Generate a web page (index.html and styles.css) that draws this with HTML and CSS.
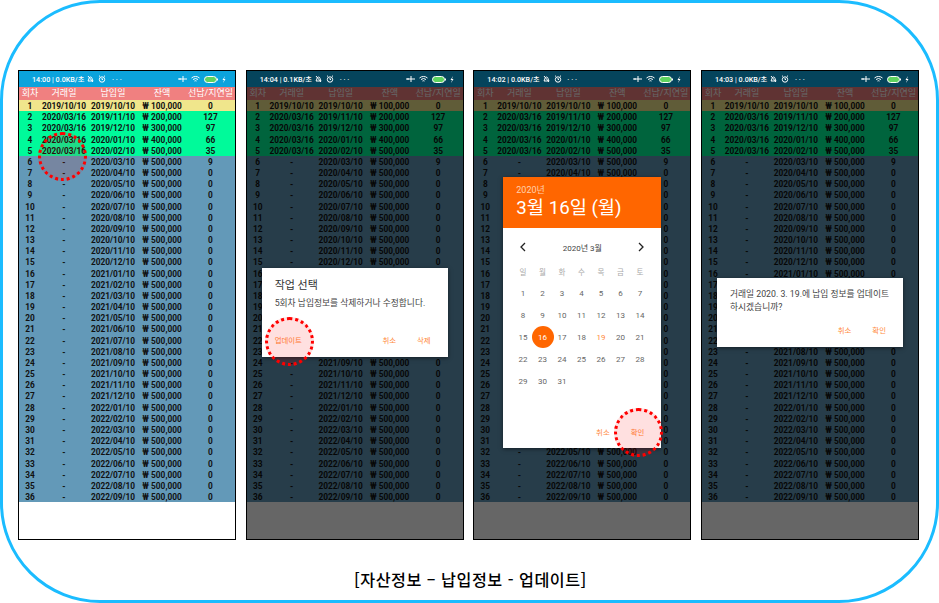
FILE: index.html
```html
<!DOCTYPE html>
<html lang="ko">
<head>
    <meta charset="UTF-8">
    <title>자산정보 - 납입정보 - 업데이트</title>
    <link rel="stylesheet" href="styles.css">
</head>
<body>
    <div class="frame">
        <div class="phones">
            <!-- 1: list -->
            <div class="phone" data-status="14:00 | 0.0KB/초">
                <div class="tap tap-row"></div>
            </div>

            <!-- 2: action dialog -->
            <div class="phone dim" data-status="14:04 | 0.1KB/초">
                <div class="overlay">
                    <div class="dialog dialog-action">
                        <h3 class="dialog-title">작업 선택</h3>
                        <p class="dialog-text">5회차 납입정보를 삭제하거나 수정합니다.</p>
                        <div class="dialog-buttons">
                            <span class="btn btn-left">업데이트</span>
                            <span class="btn">취소</span>
                            <span class="btn">삭제</span>
                        </div>
                    </div>
                </div>
                <div class="tap tap-update"></div>
            </div>

            <!-- 3: date picker -->
            <div class="phone dim" data-status="14:02 | 0.0KB/초">
                <div class="overlay">
                    <div class="dialog picker">
                        <div class="picker-head">
                            <div class="picker-year">2020년</div>
                            <div class="picker-date">3월 16일 (월)</div>
                        </div>
                        <div class="picker-nav">
                            <svg class="chevron" viewBox="0 0 8 10"><path d="M6 1 2 5l4 4" /></svg>
                            <span>2020년 3월</span>
                            <svg class="chevron" viewBox="0 0 8 10"><path d="M2 1l4 4-4 4" /></svg>
                        </div>
                        <div class="calendar" id="calendar"></div>
                        <div class="dialog-buttons picker-buttons">
                            <span class="btn">취소</span>
                            <span class="btn">확인</span>
                        </div>
                    </div>
                </div>
                <div class="tap tap-confirm"></div>
            </div>

            <!-- 4: confirm dialog -->
            <div class="phone dim" data-status="14:03 | 0.0KB/초">
                <div class="overlay">
                    <div class="dialog dialog-confirm">
                        <p class="dialog-text">거래일 2020. 3. 19.에 납입 정보를 업데이트<br>하시겠습니까?</p>
                        <div class="dialog-buttons">
                            <span class="btn">취소</span>
                            <span class="btn">확인</span>
                        </div>
                    </div>
                </div>
            </div>
        </div>
        <div class="caption">[자산정보 – 납입정보 - 업데이트]</div>
    </div>
    <script src="app.js"></script>
</body>
</html>
```

FILE: styles.css
```css
body {
    margin: 0;
    background-color: #fff;
    font-family: Roboto, "Noto Sans CJK KR", sans-serif;
}

.frame {
    width: 939px;
    height: 603px;
    box-sizing: border-box;
    border: 3px solid #1bbcff;
    border-radius: 100px;
    padding: 67px 0 0 15px;
    overflow: hidden;
}

.phones {
    display: flex;
    gap: 9.67px;
}

.phone {
    position: relative;
    width: 218px;
    height: 470px;
    box-sizing: border-box;
    border: 1px solid #000;
    background-color: #fff;
    overflow: hidden;
}

/* status bar */
.status {
    display: flex;
    align-items: center;
    height: 16px;
    padding: 0 6px 0 13px;
    background-color: #0ba3dc;
    color: #fff;
    font-size: 7.2px;
    font-weight: 500;
    white-space: nowrap;
}

.dim .status {
    background-color: #05445c;
}

.status-icons {
    display: flex;
    align-items: center;
    gap: 4px;
    margin-left: 3px;
}

.status-right {
    margin-left: auto;
    margin-right: 3px;
}

.status svg {
    display: block;
    fill: none;
    stroke: #fff;
    stroke-width: 1;
}

/* table */
.row {
    display: grid;
    grid-template-columns: 22px 46px 52px 46px 51px;
    height: 11.18px;
    line-height: 13px;
    font-size: 8.3px;
    font-weight: 700;
    color: #111;
    text-align: center;
    white-space: nowrap;
}

.row-head {
    height: 13px;
    line-height: 13px;
    font-size: 9px;
    font-weight: 400;
    color: #fff;
    background-color: #f08080;
}

.row-first {
    background-color: #f0e68c;
}

.row-paid {
    background-color: #00fa9a;
}

.row-due {
    background-color: #6399b8;
}

/* dialogs */
.overlay {
    position: absolute;
    top: 16px;
    left: 0;
    right: 0;
    bottom: 0;
    background-color: rgba(0, 0, 0, 0.6);
}

.dialog {
    position: absolute;
    background-color: #fff;
    box-shadow: 0 1px 4px rgba(0, 0, 0, 0.5);
    color: #444;
}

.dialog-title {
    margin: 0;
    font-size: 11px;
    font-weight: 400;
    line-height: 16px;
    color: #333;
}

.dialog-text {
    margin: 0;
    font-size: 8.75px;
    line-height: 13px;
    color: #444;
    white-space: nowrap;
}

.dialog-buttons {
    display: flex;
    justify-content: flex-end;
    gap: 21px;
    font-size: 7.4px;
    line-height: 10px;
    color: #ff8a3c;
}

.btn-left {
    margin-right: auto;
}

.dialog-action {
    left: 15px;
    top: 181px;
    width: 186px;
    height: 89px;
    box-sizing: border-box;
    padding: 10px 17px 0 13px;
}

.dialog-action .dialog-text {
    margin-top: 3px;
}

.dialog-action .dialog-buttons {
    margin-top: 26px;
}

.dialog-confirm {
    left: 15px;
    top: 191px;
    width: 186px;
    height: 69px;
    box-sizing: border-box;
    padding: 10px 17px 0 13px;
}

.dialog-confirm .dialog-buttons {
    margin-top: 12px;
}

/* date picker */
.picker {
    left: 29px;
    top: 90px;
    width: 158px;
    height: 271px;
}

.picker-head {
    height: 51px;
    box-sizing: border-box;
    padding: 7px 13px 0;
    background-color: #ff6600;
    color: #fff;
}

.picker-year {
    font-size: 9px;
    line-height: 12px;
    color: #ffd0ae;
}

.picker-date {
    font-size: 18.7px;
    line-height: 24px;
}

.picker-nav {
    display: flex;
    justify-content: space-between;
    align-items: center;
    height: 12px;
    margin-top: 13px;
    padding: 0 16px;
    font-size: 8px;
    color: #444;
}

.chevron {
    width: 8px;
    height: 10px;
    fill: none;
    stroke: #222;
    stroke-width: 1.3;
}

.calendar {
    display: grid;
    grid-template-columns: repeat(7, 19.5px);
    grid-auto-rows: 22px;
    align-items: center;
    justify-items: center;
    margin: 7px 0 0 10px;
    font-size: 8px;
    color: #666;
}

.day-name {
    color: #aaa;
    font-size: 7.5px;
}

.day-now {
    color: #ff8a3c;
}

.day-picked {
    display: flex;
    align-items: center;
    justify-content: center;
    width: 22px;
    height: 22px;
    border-radius: 50%;
    background-color: #ff6600;
    color: #fff;
}

.picker-buttons {
    position: absolute;
    right: 17px;
    bottom: 10px;
    gap: 21px;
}

/* red dotted tap markers */
.tap {
    position: absolute;
    width: 49px;
    height: 49px;
    box-sizing: border-box;
    border: 3px dotted #f00;
    border-radius: 50%;
    background-color: rgba(255, 0, 0, 0.12);
}

.tap-row {
    left: 19px;
    top: 61px;
}

.tap-update {
    left: 18px;
    top: 246px;
}

.tap-confirm {
    left: 140px;
    top: 337px;
}

.caption {
    margin: 29px 0 0 336px;
    width: 232px;
    font-family: "Noto Sans CJK KR", sans-serif;
    font-size: 16.2px;
    letter-spacing: 0.5px;
    font-weight: 500;
    line-height: 20px;
    color: #000;
    text-align: center;
    white-space: nowrap;
}
```

FILE: app.js
```js
// status bar icons
const leftIcons = `
    <svg width="7" height="8" viewBox="0 0 7 8"><path d="M1 6c1-1 .5-4 2.500-4S5 5 6 6zM1 1l5 6" /></svg>
    <svg width="8" height="8" viewBox="0 0 8 8"><circle cx="4" cy="4.500" r="2.700" /><path d="M1 1.500 2 .7M7 1.500 6 .7M4 3v1.500h1" /></svg>
    <span>&nbsp;· · ·</span>`;

const rightIcons = `
    <svg width="9" height="8" viewBox="0 0 9 8"><path d="M0 4h9M5 1v6M2 3v2" /></svg>
    <svg width="9" height="8" viewBox="0 0 9 8"><path d="M.5 3a6 6 0 0 1 8 0M2 4.500a4 4 0 0 1 5 0M3.500 6a2 2 0 0 1 2 0" /></svg>
    <svg width="14" height="7" viewBox="0 0 14 7"><rect x=".5" y=".5" width="12" height="6" rx="3" style="fill:#5fd35f" /><rect x="13" y="2.500" width="1" height="2" style="fill:#fff;stroke:none" /></svg>
    <svg width="4" height="7" viewBox="0 0 4 7"><path d="M3 0 .5 4H2L1 7l2.500-4H2z" style="fill:#fff;stroke:none" /></svg>`;

const formatWon = (amount) => `₩ ${amount.toLocaleString('en-US')}`;

// payment rows, one per month starting 2019/10
const buildRows = () => {
    const rows = [];
    const traded = { 1: '2019/10/10', 2: '2020/03/16', 3: '2020/03/16', 4: '2020/03/16', 5: '2020/03/16' };
    const late = { 2: 127, 3: 97, 4: 66, 5: 35, 6: 9 };

    for (let n = 1; n <= 36; n++) {
        const month = 9 + n;
        const year = 2019 + Math.floor((month - 1) / 12);
        const mm = String(((month - 1) % 12) + 1).padStart(2, '0');
        rows.push([
            n,
            traded[n] || '-',
            `${year}/${mm}/10`,
            formatWon(Math.min(n, 5) * 100000),
            late[n] || 0,
        ]);
    }
    return rows;
};

const cells = (values) => values.map((v) => `<span>${v}</span>`).join('');

const rowClass = (n) => {
    if (n === 1) return 'row-first';
    return n <= 5 ? 'row-paid' : 'row-due';
};

const rowsHtml = buildRows()
    .map((r) => `<div class="row ${rowClass(r[0])}">${cells(r)}</div>`)
    .join('');

document.querySelectorAll('.phone').forEach((phone) => {
    const top = `
        <div class="status">
            <span>${phone.dataset.status}</span>
            <div class="status-icons">${leftIcons}</div>
            <div class="status-icons status-right">${rightIcons}</div>
        </div>
        <div class="row row-head">${cells(['회차', '거래일', '납입일', '잔액', '선납/지연일'])}</div>
        ${rowsHtml}`;
    phone.insertAdjacentHTML('afterbegin', top);
});

// March 2020 starts on a Sunday
const calendar = document.getElementById('calendar');
let calendarHtml = ['일', '월', '화', '수', '목', '금', '토']
    .map((d) => `<span class="day-name">${d}</span>`)
    .join('');

for (let day = 1; day <= 31; day++) {
    let cls = '';
    if (day === 16) cls = 'day-picked';
    if (day === 19) cls = 'day-now';
    calendarHtml += `<span class="${cls}">${day}</span>`;
}
calendar.innerHTML = calendarHtml;
```
